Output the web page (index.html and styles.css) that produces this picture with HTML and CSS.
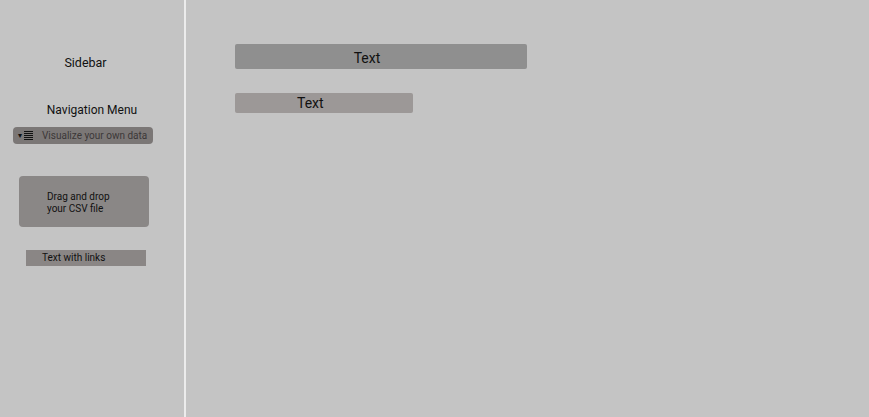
FILE: index.html
```html
<!DOCTYPE html>
<html>
<head>
<meta charset="utf-8">
<link rel="stylesheet" href="styles.css">
</head>
<body>
<div class="app">
  <aside class="sidebar">
    <div class="sb-title">Sidebar</div>
    <div class="nav-title">Navigation Menu</div>
    <div class="select">
      <span class="caret">▾</span>
      <svg class="list-icon" width="9" height="9" viewBox="0 0 9 9"><path d="M0 0.5H9M0 2.5H9M0 4.5H9M0 6.5H9M0 8.5H9" stroke="#111" stroke-width="1"/></svg>
      <span class="select-text">Visualize your own data</span>
    </div>
    <div class="drop">
      <div class="drop-text">Drag and drop<br>your CSV file</div>
    </div>
    <div class="links">Text with links</div>
  </aside>
  <main class="main">
    <div class="bar1">Text</div>
    <div class="bar2">Text</div>
  </main>
</div>
</body>
</html>
```
FILE: styles.css
```css
html, body { margin: 0; padding: 0; }
body {
  background: #c4c4c4;
  font-family: Roboto, "Liberation Sans", sans-serif;
  color: #111;
  width: 869px;
  height: 417px;
  overflow: hidden;
}
.app { display: flex; height: 417px; }
.sidebar {
  width: 184px;
  border-right: 2px solid #ececec;
  display: flex;
  flex-direction: column;
  box-sizing: content-box;
}
.sb-title {
  font-size: 12.5px;
  text-align: center;
  margin-top: 55px;
  margin-left: -13px;
  line-height: 16px;
}
.nav-title {
  font-size: 12px;
  text-align: center;
  margin-top: 31px;
  line-height: 16px;
}
.select {
  margin: 9px 0 0 13px;
  width: 140px;
  height: 17px;
  background: #7b7776;
  border-radius: 4px;
  display: flex;
  align-items: center;
  box-sizing: border-box;
  padding-left: 5px;
}
.caret { font-size: 8px; line-height: 8px; margin-right: 2px; color: #111; }
.list-icon { margin-right: 9px; }
.select-text { font-size: 10px; color: #3b3838; }
.drop {
  margin: 32px 0 0 19px;
  width: 130px;
  height: 51px;
  background: #8a8786;
  border-radius: 4px;
  box-sizing: border-box;
  padding: 15px 0 0 28px;
}
.drop-text { font-size: 10px; line-height: 12px; }
.links {
  margin: 23px 0 0 26px;
  width: 120px;
  height: 16px;
  background: #8a8685;
  font-size: 10px;
  line-height: 16px;
  box-sizing: border-box;
  padding-left: 16px;
}
.main {
  flex: 1;
  padding: 44px 0 0 49px;
  display: flex;
  flex-direction: column;
  align-items: flex-start;
}
.bar1 {
  width: 292px;
  height: 25px;
  background: #8f8f8f;
  border-radius: 2px;
  text-align: center;
  font-size: 14px;
  line-height: 28px;
  box-sizing: border-box;
  padding-right: 28px;
}
.bar2 {
  margin-top: 24px;
  width: 178px;
  height: 20px;
  background: #9c9897;
  border-radius: 2px;
  font-size: 14px;
  line-height: 20px;
  box-sizing: border-box;
  padding-left: 62px;
}
```
